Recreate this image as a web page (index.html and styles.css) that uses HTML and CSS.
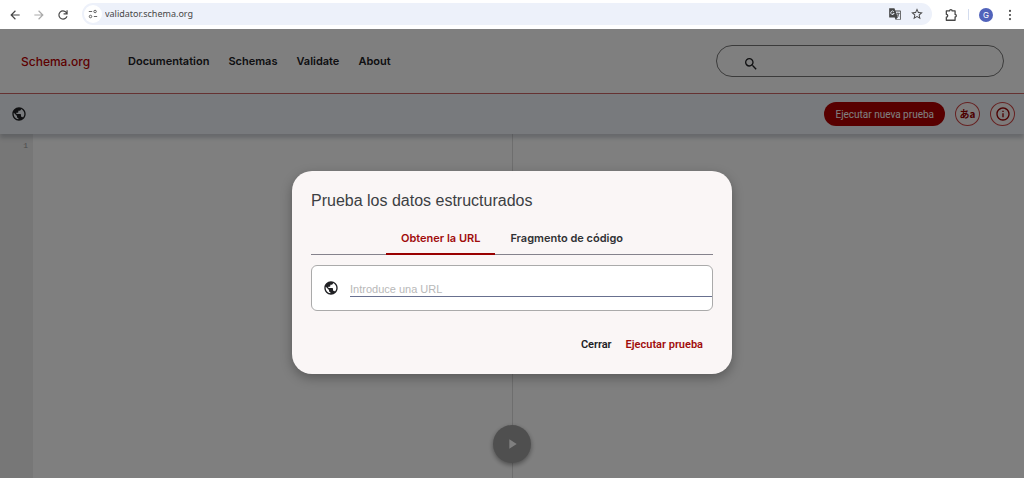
FILE: index.html
```
<!DOCTYPE html>
<html lang="es">
<head>
  <meta charset="UTF-8" />
  <meta name="viewport" content="width=device-width, initial-scale=1" />
  <title>Schema Markup Validator</title>
  <link rel="stylesheet" href="styles.css">
</head>
<body>

<svg class="sprite" aria-hidden="true">
  <symbol id="globe" viewBox="0 0 24 24">
    <path d="M12 2C6.48 2 2 6.48 2 12s4.48 10 10 10 10-4.48 10-10S17.52 2 12 2zm-1 17.93c-3.95-.49-7-3.85-7-7.93 0-.62.08-1.21.21-1.79L9 15v1c0 1.1.9 2 2 2v1.93zm6.9-2.54c-.26-.81-1-1.39-1.9-1.39h-1v-3c0-.55-.45-1-1-1H8v-2h2c.55 0 1-.45 1-1V7h2c1.1 0 2-.9 2-2v-.41c2.93 1.19 5 4.06 5 7.41 0 2.08-.8 3.97-2.1 5.39z"/>
  </symbol>
</svg>

<!-- Browser bar -->
<div class="browser">
  <div class="browser-nav">
    <button class="browser-btn" aria-label="Atrás">
      <svg viewBox="0 0 24 24"><path d="M20 11H7.83l5.59-5.59L12 4l-8 8 8 8 1.41-1.41L7.83 13H20z"/></svg>
    </button>
    <button class="browser-btn" aria-label="Adelante" disabled>
      <svg viewBox="0 0 24 24"><path d="M12 4l-1.41 1.41L16.17 11H4v2h12.17l-5.58 5.59L12 20l8-8z"/></svg>
    </button>
    <button class="browser-btn" aria-label="Recargar">
      <svg viewBox="0 0 24 24"><path d="M12 20q-3.35 0-5.67-2.33T4 12t2.33-5.67T12 4q1.73 0 3.3.71T18 6.75V4h2v7h-7V9h4.2q-.8-1.4-2.19-2.2T12 6Q9.500 6 7.750 7.750T6 12t1.750 4.250T12 18q1.930 0 3.480-1.100T17.650 14h2.100q-.7 2.650-2.850 4.330T12 20z"/></svg>
    </button>
  </div>
  <div class="address">
    <button class="site-info" aria-label="Información del sitio">
      <svg viewBox="0 0 12 12"><path d="M1 3h4M7 9h4"/><circle cx="8.500" cy="3" r="1.500"/><circle cx="3" cy="9" r="1.500"/></svg>
    </button>
    <input class="address-input" type="text" value="validator.schema.org" aria-label="Dirección" />
    <button class="browser-btn" aria-label="Traducir">
      <svg viewBox="0 0 24 24">
        <path d="M2 2h9l1.500 4H21a1 1 0 0 1 1 1v14a1 1 0 0 1-1 1h-8l-1.500-4H3a1 1 0 0 1-1-1z"/>
        <path fill="#edf1fa" d="M13.200 7.500l3.600 10.500-3 2.800h6.900V7.500z"/>
        <path fill="none" stroke="#edf1fa" stroke-width="1.600" d="M10 8a3 3 0 1 0 .5 3H8"/>
        <path fill="none" stroke="#474747" stroke-width="1.300" d="M14.500 11h5.500M17 9.500V11M19 11q-.8 3.500-3.500 5M15.500 12.500q1.500 2.500 3.800 4"/>
      </svg>
    </button>
    <button class="browser-btn" aria-label="Añadir a marcadores">
      <svg viewBox="0 0 24 24"><path d="M22 9.240l-7.190-.62L12 2 9.190 8.630 2 9.240l5.460 4.730L5.820 21 12 17.270 18.180 21l-1.630-7.030zM12 15.400l-3.760 2.270 1-4.280-3.320-2.880 4.380-.38L12 6.100l1.710 4.040 4.380.38-3.320 2.880 1 4.280z"/></svg>
    </button>
  </div>
  <div class="browser-tools">
    <button class="browser-btn" aria-label="Extensiones">
      <svg viewBox="0 0 24 24"><path fill="none" stroke="#474747" stroke-width="2.200" stroke-linejoin="round" d="M4 5h5.500a2 2 0 1 1 4.500 0H19v6a2.100 2.100 0 1 1 0 4.200V21H4v-5.400q2.400-.4 2.400-2.500T4 10.700z"/></svg>
    </button>
    <span class="divider"></span>
    <button class="avatar" aria-label="Perfil">G</button>
    <button class="browser-btn" aria-label="Menú">
      <svg viewBox="0 0 24 24"><circle cx="12" cy="5" r="1.800"/><circle cx="12" cy="12" r="1.800"/><circle cx="12" cy="19" r="1.800"/></svg>
    </button>
  </div>
</div>

<div class="page">
  <header class="header">
    <a class="logo" href="#">Schema.org</a>
    <nav class="nav">
      <a href="#">Documentation</a>
      <a href="#">Schemas</a>
      <a href="#">Validate</a>
      <a href="#">About</a>
    </nav>
    <label class="search">
      <svg viewBox="0 0 24 24"><path d="M15.500 14h-.79l-.28-.27A6.471 6.471 0 0 0 16 9.500 6.500 6.500 0 1 0 9.500 16c1.610 0 3.090-.59 4.230-1.570l.27.28v.79l5 4.990L20.490 19l-4.990-5zm-6 0C7.010 14 5 11.990 5 9.500S7.010 5 9.500 5 14 7.010 14 9.500 11.990 14 9.500 14z"/></svg>
      <input type="text" aria-label="Search" />
    </label>
  </header>

  <div class="toolbar">
    <svg class="globe"><use href="#globe"/></svg>
    <div class="toolbar-actions">
      <button class="new-test">Ejecutar nueva prueba</button>
      <button class="round-btn" aria-label="Idioma">あa</button>
      <button class="round-btn" aria-label="Información">
        <svg viewBox="0 0 24 24"><path d="M11 7h2v2h-2zm0 4h2v6h-2zm1-9C6.480 2 2 6.480 2 12s4.480 10 10 10 10-4.480 10-10S17.520 2 12 2zm0 18c-4.410 0-8-3.590-8-8s3.590-8 8-8 8 3.590 8 8-3.590 8-8 8z"/></svg>
      </button>
    </div>
  </div>

  <main class="workspace">
    <div class="editor">
      <div class="gutter">1</div>
    </div>
    <div class="results"></div>
    <button class="play" aria-label="Ejecutar">
      <svg viewBox="0 0 24 24"><path d="M8 5v14l11-7z"/></svg>
    </button>
  </main>

  <!-- Dialog -->
  <div class="overlay">
    <form class="dialog" role="dialog" aria-labelledby="dialog-title">
      <h2 id="dialog-title">Prueba los datos estructurados</h2>
      <div class="tabs" role="tablist">
        <button type="button" class="tab active" role="tab" aria-selected="true">Obtener la URL</button>
        <button type="button" class="tab" role="tab" aria-selected="false">Fragmento de código</button>
      </div>
      <div class="url-box">
        <svg class="globe"><use href="#globe"/></svg>
        <input type="text" placeholder="Introduce una URL" aria-label="URL" />
      </div>
      <div class="dialog-actions">
        <button type="button">Cerrar</button>
        <button type="button" class="primary">Ejecutar prueba</button>
      </div>
    </form>
  </div>
</div>

</body>
</html>
```
FILE: styles.css
```
* {
  box-sizing: border-box;
}
body {
  margin: 0;
  min-height: 100vh;
  display: flex;
  flex-direction: column;
  font-family: Inter, "Liberation Sans", sans-serif;
  font-size: 11px;
  color: #202124;
  background: #fff;
}
button, input {
  margin: 0;
  padding: 0;
  border: none;
  background: none;
  font: inherit;
  color: inherit;
  outline: none;
}
button {
  cursor: pointer;
}
a {
  color: inherit;
  text-decoration: none;
}
svg {
  display: block;
  flex: none;
  fill: currentColor;
}
.sprite {
  position: absolute;
  width: 0;
  height: 0;
}

/* Browser bar */
.browser {
  display: flex;
  align-items: center;
  height: 29px;
  padding: 0 7px 0 8px;
  color: #474747;
}
.browser-nav {
  display: flex;
  gap: 10px;
}
.browser-btn {
  width: 14px;
  height: 14px;
}
.browser-btn svg {
  width: 100%;
  height: 100%;
}
.browser-btn:disabled {
  color: #aaa;
}
.address {
  flex: 1;
  display: flex;
  align-items: center;
  gap: 8px;
  height: 22px;
  margin: 0 12px 2px;
  padding: 0 8px 0 2px;
  border-radius: 11px;
  background: #edf1fa;
}
.site-info {
  display: flex;
  align-items: center;
  justify-content: center;
  width: 18px;
  height: 18px;
  border-radius: 50%;
  background: #fff;
}
.site-info svg {
  width: 10px;
  height: 10px;
  fill: none;
  stroke: currentColor;
}
.address-input {
  flex: 1;
  min-width: 0;
  margin-left: -5px;
  font-family: "Noto Sans", sans-serif;
  font-size: 9px;
}
.browser-tools {
  display: flex;
  align-items: center;
  gap: 10px;
}
.divider {
  width: 1px;
  height: 11px;
  background: #d3dcee;
}
.avatar {
  width: 14px;
  height: 14px;
  border-radius: 50%;
  background: #5163bb;
  color: #fff;
  font-size: 8px;
  line-height: 14px;
}

/* Site */
.page {
  position: relative;
  flex: 1;
  display: flex;
  flex-direction: column;
}
.header {
  display: flex;
  align-items: center;
  height: 65px;
  padding: 0 20px 0 21px;
  border-bottom: 1px solid #c66;
}
.logo {
  width: 107px;
  font-size: 12px;
  font-weight: 500;
  color: #b00;
}
.nav {
  display: flex;
  gap: 19px;
  font-weight: 600;
}
.search {
  display: flex;
  align-items: center;
  width: 288px;
  height: 32px;
  margin-left: auto;
  padding: 6px 16px 0 26px;
  border: 1px solid #777;
  border-radius: 16px;
}
.search svg {
  width: 16px;
  height: 16px;
}
.search input {
  flex: 1;
  min-width: 0;
}
.toolbar {
  display: flex;
  align-items: center;
  justify-content: space-between;
  height: 40px;
  padding: 0 9px 0 11px;
  background: #f1f5fa;
  box-shadow: 0 4px 4px rgba(60, 70, 90, 0.25);
  z-index: 1;
}
.globe {
  width: 16px;
  height: 16px;
}
.toolbar-actions {
  display: flex;
  gap: 10px;
}
.new-test {
  height: 24px;
  padding: 0 11px;
  border-radius: 12px;
  background: #b00000;
  color: #fff;
  font-family: Roboto, sans-serif;
  font-size: 10px;
}
.round-btn {
  display: flex;
  align-items: center;
  justify-content: center;
  width: 25px;
  height: 24px;
  border: 1px solid #c44;
  border-radius: 50%;
  background: #faf6f6;
  color: #900;
  font-family: "Noto Sans CJK JP", sans-serif;
  font-size: 10px;
  font-weight: 700;
  line-height: 16px;
}
.round-btn svg {
  width: 16px;
  height: 16px;
}
.workspace {
  position: relative;
  flex: 1;
  display: flex;
}
.editor {
  flex: 1;
}
.gutter {
  width: 33px;
  height: 100%;
  padding: 7px 5px;
  background: #eee;
  color: #999;
  font-family: "Liberation Mono", monospace;
  font-size: 8px;
  text-align: right;
}
.results {
  flex: 1;
  border-left: 1px solid #ddd;
}
.play {
  position: absolute;
  left: 50%;
  bottom: 15px;
  display: flex;
  align-items: center;
  justify-content: center;
  width: 38px;
  height: 38px;
  border-radius: 50%;
  background: #9e9e9e;
  color: #fff;
  box-shadow: 0 2px 5px rgba(0, 0, 0, 0.4);
  transform: translateX(-50%);
}
.play svg {
  width: 16px;
  height: 16px;
}

/* Dialog */
.overlay {
  position: absolute;
  inset: 0;
  z-index: 2;
  display: flex;
  justify-content: center;
  align-items: flex-start;
  padding-top: 142px;
  background: rgba(0, 0, 0, 0.5);
}
.dialog {
  width: 440px;
  max-width: 90%;
  padding: 20px 19px 19px;
  border-radius: 20px;
  background: #faf6f6;
  box-shadow: 0 4px 12px rgba(0, 0, 0, 0.3);
}
.dialog h2 {
  margin: 0 0 12px;
  font-family: "Liberation Sans", sans-serif;
  font-size: 16px;
  font-weight: 400;
  line-height: 20px;
  color: #3c4043;
}
.tabs {
  display: flex;
  justify-content: center;
  border-bottom: 1px solid #85828c;
}
.tab {
  height: 32px;
  margin-bottom: -1px;
  padding: 0 15px;
  border-bottom: 2px solid transparent;
  font-weight: 600;
  color: #303134;
}
.tab.active {
  border-color: #900;
  color: #a00c0c;
}
.url-box {
  display: flex;
  align-items: center;
  gap: 11px;
  height: 46px;
  margin-top: 10px;
  padding-left: 11px;
  border: 1px solid #aaa;
  border-radius: 6px;
  background: #fff;
}
.url-box input {
  flex: 1;
  align-self: flex-start;
  min-width: 0;
  height: 16px;
  margin-top: 15px;
  border-bottom: 1px solid #68708f;
  font-family: "Liberation Sans", sans-serif;
}
.url-box input::placeholder {
  color: #b8b8b8;
}
.dialog-actions {
  display: flex;
  justify-content: flex-end;
  gap: 14px;
  margin-top: 25px;
  padding: 0 10px 1px;
  font-family: Roboto, sans-serif;
  font-weight: 600;
  line-height: 18px;
}
.dialog-actions .primary {
  color: #a00c0c;
}
```
